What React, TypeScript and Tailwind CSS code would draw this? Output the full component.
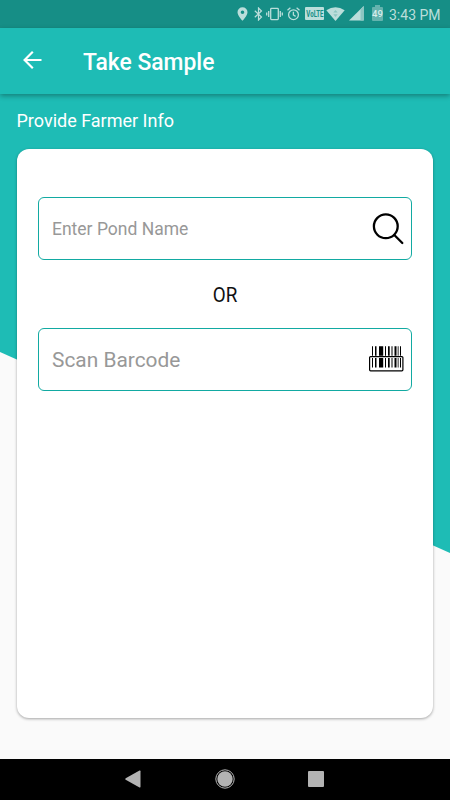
import React from "react";

function StatusBar() {
  return (
    <header className="flex h-[27.500px] items-center bg-[#168e86] pl-[237px] text-[#bbdedb]">
      <svg className="h-[14px] w-[11px] shrink-0" viewBox="0 0 11 14" fill="currentColor">
        <path fillRule="evenodd" d="M5.5 0.3A5 5 0 0 0 .5 5.300C.5 8.800 5.500 13.800 5.500 13.800S10.500 8.800 10.500 5.300A5 5 0 0 0 5.500.3ZM5.500 3.400A1.800 1.800 0 1 1 5.500 7 1.800 1.800 0 0 1 5.500 3.400Z" />
      </svg>
      <svg className="ml-[6px] h-[14px] w-[9px] shrink-0" viewBox="0 0 9 14" fill="none" stroke="currentColor" strokeWidth="1.2">
        <path d="M.8 3.800 7.500 10 4.500 13V1l3 3L.8 10.200" />
      </svg>
      <svg className="ml-[3px] h-[14px] w-[17px] shrink-0" viewBox="0 0 17 14" fill="none" stroke="currentColor" strokeWidth="1.3">
        <rect x="4.700" y="1.400" width="7.600" height="11.200" rx="0.800" />
        <path d="M2.700 4v6M.7 5.400v3.200M14.300 4v6M16.300 5.400v3.200" />
      </svg>
      <svg className="ml-[4px] h-[14px] w-[13px] shrink-0" viewBox="0 0 13 14" fill="none" stroke="currentColor" strokeWidth="1.300">
        <circle cx="6.500" cy="7.700" r="4.900" />
        <path d="M.5 3.200 3.400.8M12.500 3.200 9.600.8M6.400 4.700V8l2.200 1.400" />
      </svg>
      <span className="ml-[5px] flex h-[13px] w-[19px] shrink-0 items-center justify-center rounded-[1px] bg-[#bbdedb] text-[#168e86]">
        <span className="origin-center scale-x-[0.72] font-['Roboto',sans-serif] text-[8.500px] font-bold leading-none">VoLTE</span>
      </span>
      <svg className="ml-[2px] h-[14px] w-[19px] shrink-0" viewBox="0 0 19 14">
        <path fill="currentColor" d="M.3 3.300Q9.500-3 18.700 3.300L9.500 14Z" />
        <path fill="#8cc6c2" d="m9.500 3 2.200 2.600H7.300ZM9.500 10 7.300 7.300h4.400Z" />
      </svg>
      <svg className="ml-[4px] h-[15px] w-[15px] shrink-0" viewBox="0 0 15 15">
        <path fill="currentColor" d="M0 14.500 14.700 0v14.500Z" />
        <path fill="#8cc6c2" d="M11.500 3.200 14.700 0v14.500h-3.200Z" />
      </svg>
      <span className="ml-[8px] mb-[2px] flex w-[11px] shrink-0 flex-col items-center">
        <span className="h-[2px] w-[5px] bg-[#64b3ae]" />
        <span className="flex h-[14px] w-[11px] items-center justify-center rounded-[1px] bg-[#64b3ae] font-['Roboto',sans-serif] text-[9.500px] font-medium leading-none text-[#d8eeec]">
          49
        </span>
      </span>
      <span className="ml-[6px] mt-[2px] whitespace-nowrap font-['Roboto',sans-serif] text-[14px] leading-none">3:43 PM</span>
    </header>
  );
}

function AppBar() {
  return (
    <div className="z-10 flex h-[66.500px] items-center bg-[#1ebcb5] pl-[23px] text-white shadow-[0_2px_5px_rgba(0,0,0,0.32)]">
      <svg className="mb-[2px] h-[18px] w-[19px]" viewBox="0 0 19 18" fill="none" stroke="white" strokeWidth="2.200">
        <path d="M18.500 9H1.700M9.800.8 1.600 9l8.200 8.200" />
      </svg>
      <h1 className="ml-[41px] mt-[3px] whitespace-nowrap text-[23.500px] font-medium leading-none"><span className="inline-block origin-left scale-x-[0.973]">Take Sample</span></h1>
    </div>
  );
}

function SearchIcon() {
  return (
    <svg className="h-[32px] w-[32px]" viewBox="0 0 32 32" fill="none" stroke="black" strokeWidth="2.300" strokeLinecap="round">
      <circle cx="13.800" cy="13.300" r="11.900" />
      <path d="m22.300 22 8 8" />
    </svg>
  );
}

function BarcodeIcon() {
  return (
    <svg className="mb-[2px] h-[26px] w-[35px]" viewBox="0 0 35 26">
      <path d="M3 .3h1v21.200H3zM6 .3h1.500v21.200H6zM10 .3h4.200v21.200H10zM16 .3h1v21.200h-1zM19 .3h1.700v21.200H19zM22.500 .3h1v21.200h-1zM25.500 .3h2v21.200h-2zM31 .3h1v21.200h-1z" />
      <path d="M28.500 .3H30v21.200h-1.500z" fill="#777" />
      <path d="M1 9.800h33v2.200H1z" fill="white" />
      <rect x=".6" y="10.600" width="33.300" height="14.200" rx="1" fill="none" stroke="black" strokeWidth="1.200" />
    </svg>
  );
}

function Field({ label, labelClass, children }: { label: string; labelClass: string; children: React.ReactNode }) {
  return (
    <button className="flex h-[63px] w-full items-center justify-between rounded-[6px] border border-[#12aaa2] bg-white pl-[13px]">
      <span className={`whitespace-nowrap leading-none text-[#989898] ${labelClass}`}>{label}</span>
      {children}
    </button>
  );
}

function NavigationBar() {
  return (
    <nav className="flex h-[41px] items-center bg-black pb-px pl-[125px] text-[#b3b3b3]">
      <svg className="h-[18px] w-[16px]" viewBox="0 0 16 18" fill="currentColor">
        <path d="M.7 8.200 14.500.6q1-.4 1 .7v15.400q0 1.100-1 .7L.7 9.800q-.9-.8 0-1.600Z" />
      </svg>
      <svg className="ml-[74px] h-[20px] w-[20px]" viewBox="0 0 20 20">
        <circle cx="10" cy="10" r="9.200" fill="none" stroke="currentColor" />
        <circle cx="10" cy="10" r="7.700" fill="currentColor" />
      </svg>
      <span className="ml-[73px] h-[16px] w-[16px] rounded-[1px] bg-[#b3b3b3]" />
    </nav>
  );
}

export default function App() {
  return (
    <div className="flex h-[800px] w-[450px] flex-col overflow-hidden bg-[#fafafa] font-['Roboto',sans-serif]">
      <StatusBar />
      <AppBar />
      <main className="grid h-[665px] grid-cols-1 grid-rows-1">
        <div className="col-start-1 row-start-1 bg-[#1ebcb5] [clip-path:polygon(0_0,100%_0,100%_459px,0_258px)]" />
        <div className="z-[1] col-start-1 row-start-1 flex flex-col px-[17px] pt-[17px]">
          <h2 className="-ml-[0.500px] whitespace-nowrap text-[18px] leading-[20px] text-white">Provide Farmer Info</h2>
          <section className="mt-[18px] flex h-[568.500px] w-[416px] flex-col rounded-[12px] bg-white px-[21px] pt-[48px] shadow-[0_1px_3px_rgba(0,0,0,0.35)]">
            <Field label="Enter Pond Name" labelClass="text-[17.500px] mt-[3px]">
              <span className="mr-[7px]"><SearchIcon /></span>
            </Field>
            <p className="flex h-[68px] items-center justify-center pt-[2px] text-[20px] leading-none text-[#111]"><span className="scale-x-[0.94]">OR</span></p>
            <Field label="Scan Barcode" labelClass="text-[20.900px] mt-[2px]">
              <span className="mr-[7px]"><BarcodeIcon /></span>
            </Field>
          </section>
        </div>
      </main>
      <NavigationBar />
    </div>
  );
}
